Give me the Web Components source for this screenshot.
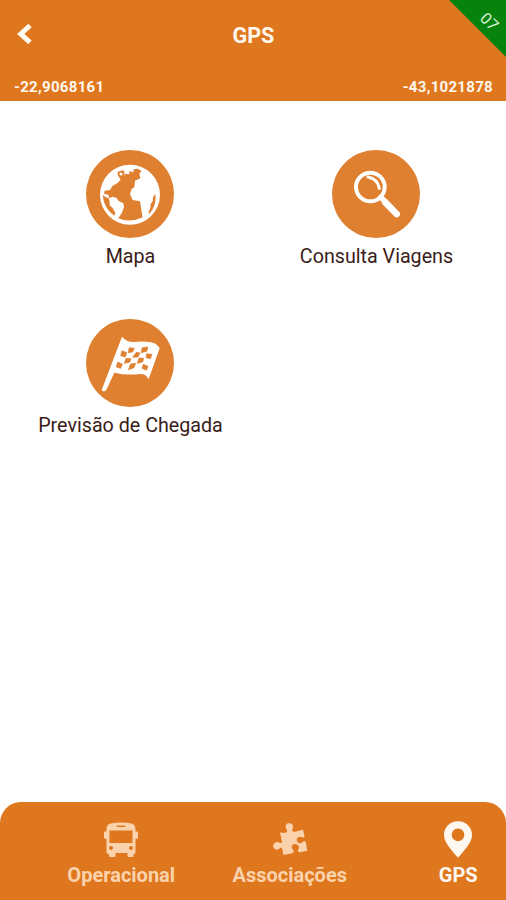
<!DOCTYPE html>
<html lang="pt-BR">
<head>
<meta charset="utf-8">
<title>GPS</title>
<style>
html,body{margin:0;height:100%;background:#fff}
body{font-family:Roboto,"Liberation Sans",sans-serif;overflow:hidden}
</style>
</head>
<body>
<gps-app></gps-app>
<script>
const define = (name, html) => customElements.define(name, class extends HTMLElement {
  constructor() {
    super();
    const t = document.createElement('template');
    t.innerHTML = html;
    this.attachShadow({mode: 'open'}).append(t.content.cloneNode(true));
  }
});

define('corner-ribbon', `
<style>
:host{position:absolute;top:0;right:0;width:57px;height:57px;background:#07820c;clip-path:polygon(0 0,100% 0,100% 100%)}
span{position:absolute;left:30px;top:12px;width:20px;height:20px;font-size:16px;font-weight:400;line-height:20px;text-align:center;color:#d9f2d5;transform:rotate(45deg)}
</style>
<span><slot></slot></span>`);

define('app-header', `
<style>
:host{display:flex;flex-direction:column;position:relative;height:101px;box-sizing:border-box;background:#df771e;color:#fff8ee;font-weight:700}
.bar{display:grid;grid-template-columns:1fr auto 1fr;align-items:center;height:72px;padding:0 16px 0 17px}
h1{margin:0;font-size:21.5px;line-height:26px}
.coords{display:flex;justify-content:space-between;padding:6px 13px 0 14px;font-size:15px;line-height:18px;letter-spacing:.3px}
svg{display:block;margin-top:-4px}
</style>
<div class="bar">
<svg width="17" height="24" viewBox="0 0 17 24"><path d="M13 3.500 3.800 12l9.200 8.300" fill="none" stroke="#fff8ee" stroke-width="5"/></svg>
<h1><slot></slot></h1>
</div>
<div class="coords"><slot name="lat"></slot><slot name="lng"></slot></div>
<slot name="ribbon"></slot>`);

define('menu-tile', `
<style>
:host{display:flex;flex-direction:column;align-items:center;height:169px;color:#3a1c18;font-size:19.7px;line-height:24px}
.disc{width:88px;height:88px;border-radius:50%;background:#df8030;margin-bottom:7px}
span{padding-left:1px}
::slotted(svg){display:block;width:88px;height:88px}
</style>
<div class="disc"><slot name="icon"></slot></div>
<span><slot></slot></span>`);

define('nav-item', `
<style>
:host{display:flex;flex-direction:column;align-items:center;color:#fad2ac;font-size:20px;line-height:24px;font-weight:700}
:host([active]){color:#fff8f0}
::slotted(svg){display:block;width:36px;height:40px;margin-bottom:3px}
</style>
<slot name="icon"></slot><span><slot></slot></span>`);

define('bottom-nav', `
<style>
:host{display:grid;grid-template-columns:repeat(3,168.5px);height:98px;box-sizing:border-box;padding:18px 0 0 37px;overflow:hidden;background:#df771e;border-radius:21px 21px 0 0}
</style><slot></slot>`);

define('gps-app', `
<style>
:host{display:flex;flex-direction:column;height:900px;width:506px;background:#fff}
main{flex:1;display:grid;grid-template-columns:246px 246px;align-content:start;padding:49px 7px 0}
</style>
<app-header>GPS<span slot="lat">-22,9068161</span><span slot="lng">-43,1021878</span><corner-ribbon slot="ribbon">07</corner-ribbon></app-header>
<main>
<menu-tile>Mapa
<svg slot="icon" viewBox="18 18 264 264"><circle cx="150" cy="152" r="90" fill="#fff"/>
<g fill="#df8030"><path d="M113 83L130 79 134 85 131 95 137 89 148 91 147 82 160 85 161 76 174 74 185 82 178 88 181 103 165 110 163 130 155 135 150 150 158 168 180 172 185 203 188 220Q150 238 115 223L125 208 132 190 130 178 115 170 110 162 97 158 88 163 85 152 72 149 74 140 90 138 98 125 112 118 122 107 113 93Z"/><path d="M68 153L78 160 86 163 89 174 89 184 98 192 106 207 103 215Q72 195 68 153ZM226 149Q231 184 207 211L206 203 211 192 212 180 218 172 219 160Z"/></g>
<circle cx="123" cy="90" r="4.500" fill="#fff"/></svg></menu-tile>
<menu-tile>Consulta Viagens
<svg slot="icon" viewBox="18 18 264 264"><g fill="none" stroke="#fff" stroke-linecap="round"><circle cx="133" cy="129" r="43" stroke-width="12"/><path d="M126 99q28 5 34 34" stroke-width="9"/><path d="m164 160 13 12" stroke-width="16"/><path d="m178 175 34 35" stroke-width="20"/></g></svg></menu-tile>
<menu-tile>Previsão de Chegada
<svg slot="icon" viewBox="18 20 264 264"><path d="M126 73Q140 90 162 89Q190 86 212 90Q230 92 239 108L206 200Q197 184 180 185Q140 190 103 181L80 231Q75 240 67 235Q65 233 67 228Z" fill="#fff"/>
<g fill="#df8030"><path d="M126 115L140 121 136 134 122 130ZM148 106L163 108 158 119 144 121ZM187 106L204 104 200 117 183 121ZM200 124L216 126 211 139 198 136ZM169 120L180 122 174 134 158 135ZM138 138L153 139 149 150 133 153ZM177 137L191 138 188 149 172 153ZM113 149L127 155 122 168 109 164ZM152 155L167 153 162 166 145 172ZM190 156L204 162 199 174 186 168Z" stroke="#df8030" stroke-width="2" stroke-linejoin="round"/></g></svg></menu-tile>
</main>
<bottom-nav>
<nav-item>Operacional
<svg slot="icon" viewBox="1.500 0 36 40"><path fill="currentColor" fill-rule="evenodd" d="M9 3.500Q19.500 1.500 30 3.500q4 1 4 6v2h1.500q1 0 1 1v5q0 1.500-2.500 1.500V32q0 1.500-1 2h-1v2q0 1-1 1h-4q-1 0-1-1v-3H14v3q0 1-1 1H8.500q-1 0-1-1v-2h-1Q5 33.500 5 32V19q-2.500 0-2.500-1.500v-5q0-1 1-1H5v-2q0-5 4-6zM15.500 5.500q-1 1 0 1.500h8q1-.5 0-1.500zM8 10.500v12.500h23V10.500zM9.500 26a2 2 0 1 0 .01 0zM29.500 26a2 2 0 1 0 .01 0z"/></svg></nav-item>
<nav-item>Associações
<svg slot="icon" viewBox="1 -.7 36 40"><path fill="currentColor" d="M9 11.500q4 1.500 6.500 0 1.500-1.500-.5-3.500-1.500-5 2.500-5.500 5-.3 4.500 4-.2 2-1 3 0 2 4 1.200l7-1.700 1.500 6q0 2.500-2.500 1.500-3-1.500-5 1-1 4 2.500 5 2 .5 4-2 2-1 2.500 2l1.200 7.500-7 1.500q-3 .2-2-2.500 2-3-1-5-4-2-5.500 1.500-.5 2 1.500 4 1.500 2-1 3l-8.700 1.800-1.300-6q-.5-2.500-2.500-.5-2.500 2-5 .5-2.500-2-1-5 2-3 5.500-1.500 3 1.500 2.700-1z"/></svg></nav-item>
<nav-item active>GPS
<svg slot="icon" viewBox="0 0 36 40"><path fill="currentColor" fill-rule="evenodd" d="M18 1.300c8 0 14 5.800 14 13.700 0 7-6 13.500-14 22.800C10 28.500 4 22 4 15 4 7.100 10 1.300 18 1.300zm0 7.200a6.300 6.300 0 1 0 .01 0z"/></svg></nav-item>
</bottom-nav>`);
</script>
</body>
</html>
